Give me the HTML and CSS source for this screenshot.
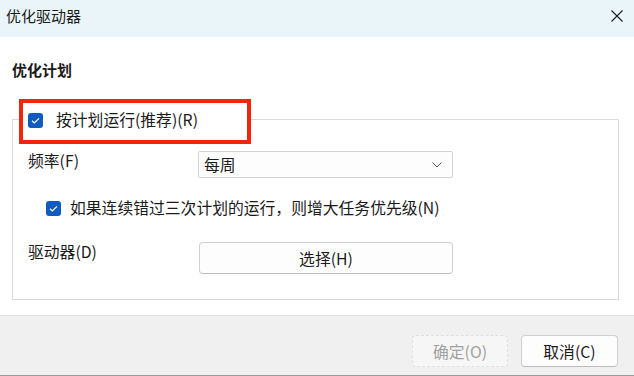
FILE: index.html
```html
<!DOCTYPE html>
<html lang="zh-CN">
<head>
<meta charset="utf-8">
<title>优化驱动器</title>
<link rel="stylesheet" href="styles.css">
</head>
<body>
<div class="window">
  <div class="titlebar">
    <span class="title">优化驱动器</span>
    <svg class="close" width="12" height="12" viewBox="0 0 12 12"><path d="M0.5 0.5 L11.5 11.5 M11.5 0.5 L0.5 11.5" stroke="#1c1c1c" stroke-width="1.1" fill="none"/></svg>
  </div>
  <div class="content">
    <div class="heading">优化计划</div>
    <div class="group">
      <div class="legend">
        <svg class="check" width="15" height="15" viewBox="0 0 15 15"><rect x="0" y="0" width="15" height="15" rx="3" fill="#0f5cc0"/><path d="M4 7.8 L6.3 10 L11 5.3" stroke="#fff" stroke-width="1.2" fill="none"/></svg>
        <span>按计划运行(推荐)(R)</span>
      </div>
      <div class="row freq">
        <span class="label">频率(F)</span>
        <div class="combo"><span>每周</span><svg width="10" height="6" viewBox="0 0 10 6"><path d="M0.5 0.5 L5 5 L9.5 0.5" stroke="#555" stroke-width="1" fill="none"/></svg></div>
      </div>
      <div class="row missed">
        <svg class="check" width="15" height="15" viewBox="0 0 15 15"><rect x="0" y="0" width="15" height="15" rx="3" fill="#0f5cc0"/><path d="M4 7.8 L6.3 10 L11 5.3" stroke="#fff" stroke-width="1.2" fill="none"/></svg>
        <span>如果连续错过三次计划的运行，则增大任务优先级(N)</span>
      </div>
      <div class="row drives">
        <span class="label">驱动器(D)</span>
        <div class="btn select">选择(H)</div>
      </div>
      <div class="highlight"></div>
    </div>
  </div>
  <div class="footer">
    <div class="btn ok">确定(O)</div>
    <div class="btn cancel">取消(C)</div>
  </div>
</div>
</body>
</html>
```

FILE: styles.css
```css
* { box-sizing: border-box; }
html, body { margin: 0; padding: 0; }
body {
  width: 634px;
  height: 376px;
  overflow: hidden;
  background: #ffffff;
  font-family: "Noto Sans CJK SC", "Noto Sans", sans-serif;
  font-size: 15.8px;
  color: #1a1a1a;
}
.window {
  width: 634px;
  height: 376px;
  display: flex;
  flex-direction: column;
}
.titlebar {
  height: 37px;
  flex: none;
  background: #e9f5f8;
  display: flex;
  align-items: flex-start;
  justify-content: space-between;
  padding: 6px 11px 0 6px;
}
.title {
  line-height: 20px;
  font-size: 15px;
}
.close { margin-top: 4px; }
.content {
  flex: 1;
  padding: 23px 15px 0 12px;
}
.heading {
  font-weight: bold;
  font-size: 15px;
  line-height: 20px;
  height: 20px;
}
.group {
  position: relative;
  margin-top: 39px;
  border: 1px solid #dadada;
  padding: 0 0 0 15px;
  height: 181px;
}
.legend {
  display: flex;
  width: 226px;
  align-items: center;
  gap: 13px;
  height: 24px;
  margin-top: -12px;
  margin-left: -5px;
  padding: 0 5px;
  background: #fff;
  line-height: 24px;
}
.check { flex: none; }
.row { display: flex; }
.label {
  width: 170px;
  flex: none;
  line-height: 20px;
}
.freq { margin-top: 19px; }
.combo {
  width: 255px;
  height: 27px;
  border: 1px solid #d3d3d3;
  border-radius: 2px;
  background: #fdfdfd;
  display: flex;
  align-items: center;
  justify-content: space-between;
  padding: 0 10px 0 5px;
}
.missed {
  margin-top: 20px;
  margin-left: 18px;
  align-items: center;
  gap: 9px;
  line-height: 20px;
  height: 20px;
}
.drives { margin-top: 24px; }
.btn {
  display: flex;
  align-items: center;
  justify-content: center;
  height: 32px;
  border: 1px solid #d0d0d0;
  border-bottom-color: #bdbdbd;
  border-radius: 4px;
  background: #fdfdfd;
}
.select {
  width: 254px;
  margin-left: 1px;
}
.highlight {
  position: absolute;
  left: 6px;
  top: -21px;
  width: 232px;
  height: 45px;
  border: 4px solid #f0250c;
}
.footer {
  flex: none;
  height: 61px;
  border-top: 1px solid #e3e3e3;
  border-bottom: 1px solid #9a9a9a;
  background: #f0f0f0;
  display: flex;
  justify-content: flex-end;
  align-items: flex-start;
  gap: 13px;
  padding: 19px 16px 0 0;
}
.ok {
  width: 96px;
  background: #f6f6f6;
  border: 1px dashed #e0e0e0;
  color: #a0a0a0;
}
.cancel {
  width: 97px;
}
```
